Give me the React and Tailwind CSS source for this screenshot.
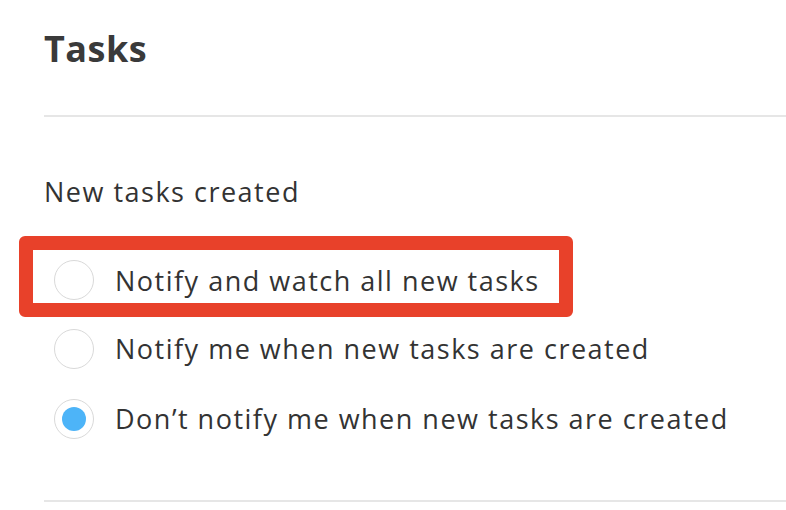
const options = [
  { id: "all", label: "Notify and watch all new tasks", highlighted: true },
  { id: "notify", label: "Notify me when new tasks are created" },
  { id: "none", label: "Don\u2019t notify me when new tasks are created", checked: true },
];

const Radio = ({ checked }) => (
  <span className="flex h-[40px] w-[40px] shrink-0 items-center justify-center rounded-full border-[1.5px] border-[#d9d9d9] bg-white">
    {checked && <span className="h-[24px] w-[24px] rounded-full bg-[#4db4f8]" />}
  </span>
);

export default function App() {
  return (
    <div
      className="flex h-[510px] w-[786px] flex-col overflow-hidden bg-white pl-[44px] text-[#333]"
      style={{ fontFamily: '"Open Sans", sans-serif' }}
    >
      {/* Header */}
      <div className="h-[115px] shrink-0 pt-[25px]">
        <h1 className="text-[36px] font-bold leading-[48px] tracking-[0.5px] text-[#3a3a3a]">Tasks</h1>
      </div>
      <div className="h-[2px] shrink-0 bg-[#e6e6e6]" />

      {/* Options */}
      <div className="h-[383px] shrink-0">
        <p className="mt-[58px] text-[27px] leading-[34px] tracking-[1.5px]">New tasks created</p>

        <div className="mt-[27px] flex flex-col">
          {options.map((opt) =>
            opt.highlighted ? (
              <div
                key={opt.id}
                className="-ml-[25px] flex w-[554px] items-start gap-[21px] rounded-[6px] border-[14px] border-[#e8412a] pb-[1px] pl-[21px] pt-[10px]"
              >
                <Radio />
                <span className="text-[27px] leading-[42px] tracking-[1.5px]">{opt.label}</span>
              </div>
            ) : (
              <div key={opt.id} className="mt-[12px] mb-[18px] flex h-[40px] items-center gap-[21px] pl-[10px]">
                <Radio checked={opt.checked} />
                <span className="text-[27px] leading-[40px] tracking-[1.5px]">{opt.label}</span>
              </div>
            )
          )}
        </div>
      </div>
      <div className="h-[2px] shrink-0 bg-[#e6e6e6]" />
    </div>
  );
}
